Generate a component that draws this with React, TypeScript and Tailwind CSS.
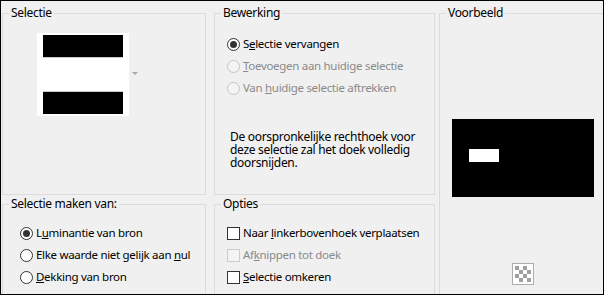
const font = { fontFamily: '"Noto Sans", "Liberation Sans", sans-serif' };

function Radio({ label, checked = false, disabled = false }: { label: React.ReactNode; checked?: boolean; disabled?: boolean }) {
  return (
    <div className="flex h-[22px] items-center gap-[3px] whitespace-nowrap">
      <span
        className={`flex h-[13px] w-[13px] shrink-0 items-center justify-center rounded-full border ${
          disabled ? "border-[#c4c4c4] bg-[#f4f4f4]" : "border-[#333] bg-white"
        }`}
      >
        {checked && <span className="h-[7px] w-[7px] rounded-full bg-[#333]" />}
      </span>
      <span className={disabled ? "text-[#8a8a8a]" : "text-black"}>{label}</span>
    </div>
  );
}

function Check({ label, disabled = false }: { label: React.ReactNode; disabled?: boolean }) {
  return (
    <div className="flex h-[22px] items-center gap-[3px] whitespace-nowrap">
      <span
        className={`h-[13px] w-[13px] shrink-0 border ${disabled ? "border-[#cccccc] bg-[#f4f4f4]" : "border-[#333] bg-white"}`}
      />
      <span className={disabled ? "text-[#8a8a8a]" : "text-black"}>{label}</span>
    </div>
  );
}

function Group({ title, className, children }: { title: string; className: string; children?: React.ReactNode }) {
  return (
    <fieldset className={`min-w-0 border border-[#dcdcdc] ${className}`}>
      <legend className="ml-[6px] whitespace-nowrap px-[2px] text-[12px] leading-[16px]">{title}</legend>
      {children}
    </fieldset>
  );
}

export default function App() {
  return (
    <div
      className="h-[295px] w-[604px] overflow-hidden border border-black bg-[#f0f0f0] text-[11.5px] tracking-[-0.3px] text-black"
      style={font}
    >
      <div className="grid grid-cols-[204px_221px_170px] grid-rows-[190px_auto] gap-x-[8px] gap-y-[1px] pl-[1px] pt-[4px]">
        <Group title="Selectie" className="h-[190px]">
          <div className="ml-[34px] mt-[12px] flex items-center gap-[2px]">
            <div className="flex h-[83px] w-[92px] flex-col justify-between bg-white px-[6px] py-[2px]">
              <div className="h-[23px] border-b border-[#c8c8c8] bg-black" />
              <div className="h-[23px] border-t border-[#c8c8c8] bg-black" />
            </div>
            <svg width="6" height="4" viewBox="0 0 6 4" className="ml-[1px] mt-[-1px]">
              <path d="M0 0H6L3 3Z" fill="#a8a8a8" />
            </svg>
          </div>
        </Group>

        <Group title="Bewerking" className="h-[190px]">
          <div className="ml-[12px] mt-[12px]">
            <Radio checked label={<>S<u>e</u>lectie vervangen</>} />
            <Radio disabled label={<><u>T</u>oevoegen aan huidige selectie</>} />
            <Radio disabled label={<>Van <u>h</u>uidige selectie aftrekken</>} />
          </div>
          <p className="ml-[15px] mt-[31px] whitespace-nowrap text-[12px] leading-[13px]">
            De oorspronkelijke rechthoek voor
            <br />
            deze selectie zal het doek volledig
            <br />
            doorsnijden.
          </p>
        </Group>

        <Group title="Voorbeeld" className="row-span-2 -ml-[4px] h-[320px]">
          <div className="ml-[12px] mt-[98px] h-[78px] w-[142px] bg-black pl-[17px] pt-[30px]">
            <div className="h-[13px] w-[30px] bg-white" />
          </div>
          <div className="ml-[72px] mt-[66px] h-[22px] w-[22px] border border-[#adadad] bg-white p-[2px]">
            <svg width="16" height="16" viewBox="0 0 16 16">
              <rect width="16" height="16" fill="#fff" />
              <path d="M0 0h4v4H0zM8 0h4v4H8zM4 4h4v4H4zM12 4h4v4h-4zM0 8h4v4H0zM8 8h4v4H8zM4 12h4v4H4zM12 12h4v4h-4z" fill="#a0a0a0" />
            </svg>
          </div>
        </Group>

        <Group title="Selectie maken van:" className="h-[120px]">
          <div className="ml-[17px] mt-[10px]">
            <Radio checked label={<>L<u>u</u>minantie van bron</>} />
            <Radio label={<>Elke waarde niet gelijk aan <u>n</u>ul</>} />
            <Radio label={<><u>D</u>ekking van bron</>} />
          </div>
        </Group>

        <Group title="Opties" className="h-[120px]">
          <div className="ml-[12px] mt-[10px]">
            <Check label={<>Naar <u>l</u>inkerbovenhoek verplaatsen</>} />
            <Check disabled label={<>Af<u>k</u>nippen tot doek</>} />
            <Check label={<><u>S</u>electie omkeren</>} />
          </div>
        </Group>
      </div>
    </div>
  );
}
